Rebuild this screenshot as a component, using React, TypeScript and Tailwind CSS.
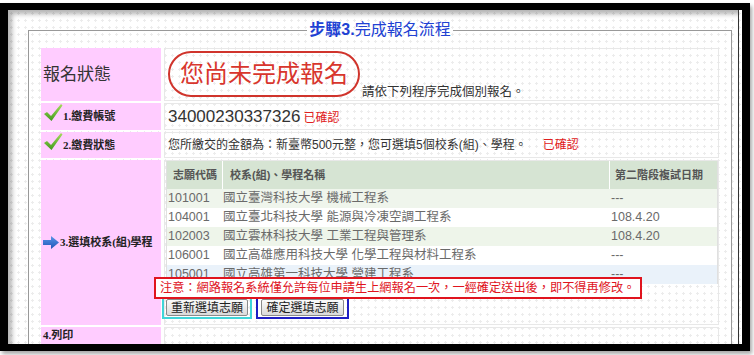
import React from "react";

const choices = [
  { code: "101001", name: "國立臺灣科技大學 機械工程系", date: "---", bg: "bg-[#eff5ec]" },
  { code: "104001", name: "國立臺北科技大學 能源與冷凍空調工程系", date: "108.4.20", bg: "bg-white" },
  { code: "102003", name: "國立雲林科技大學 工業工程與管理系", date: "108.4.20", bg: "bg-[#eef5ea]" },
  { code: "106001", name: "國立高雄應用科技大學 化學工程與材料工程系", date: "---", bg: "bg-white" },
  { code: "105001", name: "國立高雄第一科技大學 營建工程系", date: "---", bg: "bg-[#eaf2fa]" },
];

const sans = "font-['Liberation_Sans','Noto_Sans_CJK_TC',sans-serif]";
const label = "font-['Liberation_Serif','Noto_Sans_CJK_TC',serif] text-[11px] font-bold text-[#222]";

function Check() {
  return (
    <svg width="20" height="19" viewBox="0 0 20 19" className="shrink-0 -mt-[8px]">
      <defs>
        <linearGradient id="ck" x1="0" y1="0" x2="0" y2="1">
          <stop offset="0" stopColor="#a6dd5c" />
          <stop offset="1" stopColor="#3f9a1c" />
        </linearGradient>
      </defs>
      <path d="M1 11 L4 9 L8 13 L18 1 L19.5 2.5 L8.5 18 Z" fill="url(#ck)" />
    </svg>
  );
}

function Arrow() {
  return (
    <svg width="16" height="13" viewBox="0 0 16 13" className="shrink-0">
      <defs>
        <linearGradient id="ar" x1="0" y1="0" x2="0" y2="1">
          <stop offset="0" stopColor="#5a95e8" />
          <stop offset="1" stopColor="#1d55b8" />
        </linearGradient>
      </defs>
      <path d="M0 4 H8 V0 L16 6.5 L8 13 V9 H0 Z" fill="url(#ar)" />
    </svg>
  );
}

function Btn({ children }: { children: React.ReactNode }) {
  return (
    <button className="h-[17px] px-[4px] border border-[#8a8a8a] rounded-[2px] bg-gradient-to-b from-[#fbfbfb] to-[#dadada] text-[12px] leading-none text-[#222] whitespace-nowrap">
      {children}
    </button>
  );
}

export default function App() {
  return (
    <div className={`w-[754px] h-[355px] bg-white overflow-hidden pt-[3px] ${sans}`}>
      <div className="w-[750px] h-[348px] border-x-8 border-y-[7px] border-black overflow-hidden shadow-[2px_3px_4px_rgba(0,0,0,0.35)] bg-[radial-gradient(circle,#ececec_1px,transparent_1.3px)] bg-[length:7px_7px]">
        <div className="h-full mr-[3px] border-r border-[#333] shadow-[inset_4px_4px_5px_rgba(0,0,0,0.3)] pt-[10px]">
          <fieldset className="ml-[20px] mr-[8px] border border-[#999] px-[12px] pt-[8px] pb-[10px]">
            <legend className="mx-auto px-[2px] text-[16px] leading-[20px] text-[#2141d3]">
              <b>步驟3.</b>完成報名流程
            </legend>
            <div className="grid grid-cols-[120px_555px] gap-x-[3px] gap-y-[2px]">
              <div className="h-[53px] bg-[#ffccff] flex items-center pl-[2px] text-[17px] text-[#333]">報名狀態</div>
              <div className="h-[53px] border border-[#e8e8e8] flex items-end pl-[3px] pb-[1px]">
                <div className="mb-[2px] h-[46px] rounded-full border-2 border-[#d0342c] flex items-center px-[10px] text-[24px] text-[#d8362d]">
                  您尚未完成報名
                </div>
                <span className="ml-[2px] text-[12.5px] leading-[14px] text-[#333]">請依下列程序完成個別報名。</span>
              </div>

              <div className="h-[27px] bg-[#ffccff] flex items-center pl-[2px]">
                <Check />
                <span className={label}>1.繳費帳號</span>
              </div>
              <div className="h-[27px] border border-[#e8e8e8] flex items-center pl-[3px] gap-[3px]">
                <span className="text-[17px] text-[#333]">34000230337326</span>
                <span className="text-[12px] text-[#e02020] mt-[3px]">已確認</span>
              </div>

              <div className="h-[26px] bg-[#ffccff] flex items-center pl-[2px]">
                <Check />
                <span className={label}>2.繳費狀態</span>
              </div>
              <div className="h-[26px] border border-[#e8e8e8] flex items-center pl-[3px] text-[12px] text-[#333]">
                <span>您所繳交的金額為：新臺幣500元整，您可選填5個校系(組)、學程。</span>
                <span className="ml-[16px] text-[#e02020]">已確認</span>
              </div>

              <div className="h-[165px] bg-[#ffccff] flex items-center gap-[1px] pl-[2px]">
                <Arrow />
                <span className={label}>3.選填校系(組)學程</span>
              </div>
              <div className="h-[165px] border border-[#e8e8e8] relative">
                <div className="ml-[1px] w-[552px] border-x border-[#e0e0e0] text-[#6a6a6a]">
                  <div className="h-[28px] bg-[#d6e4d3] grid grid-cols-[55px_387px_1fr] items-center text-[11px] font-bold text-[#555]">
                    <span className="pl-[6px]">志願代碼</span>
                    <span className="pl-[7px] h-full flex items-center border-l border-white">校系(組)、學程名稱</span>
                    <span className="pl-[5px] h-full flex items-center border-l border-white">第二階段複試日期</span>
                  </div>
                  {choices.map((c) => (
                    <div key={c.code} className={`h-[19px] grid grid-cols-[55px_387px_1fr] items-center text-[12.5px] ${c.bg}`}>
                      <span className="pl-[1px]">{c.code}</span>
                      <span className="pl-[1px]">{c.name}</span>
                      <span className="pl-[2px]">{c.date}</span>
                    </div>
                  ))}
                </div>
                <div className="absolute left-[-11px] top-[116px] w-[488px] h-[22px] border-2 border-[#e0141e] bg-white flex items-center pl-[4px] text-[12.2px] text-[#e0141e] whitespace-nowrap">
                  注意：網路報名系統僅允許每位申請生上網報名一次，一經確定送出後，即不得再修改。
                </div>
                <div className="mt-[12px] -ml-[3px] flex gap-[4px]">
                  <div className="w-[90px] h-[23px] border-2 border-[#3fd5d9] flex items-center justify-center">
                    <Btn>重新選填志願</Btn>
                  </div>
                  <div className="w-[93px] h-[23px] border-2 border-[#1e1ec4] flex items-center justify-center">
                    <Btn>確定選填志願</Btn>
                  </div>
                </div>
              </div>

              <div className="h-[20px] bg-[#ffccff] flex items-start pl-[2px]">
                <span className={`${label} leading-[14px] pt-[1px]`}>4.列印</span>
              </div>
              <div className="h-[20px] border border-[#e8e8e8]" />
            </div>
          </fieldset>
        </div>
      </div>
    </div>
  );
}
